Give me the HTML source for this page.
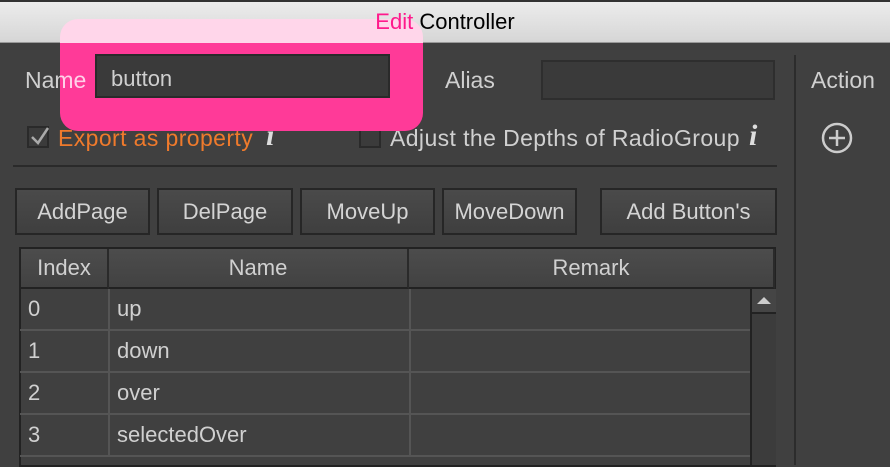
<!DOCTYPE html>
<html><head><style>
*{box-sizing:border-box;margin:0;padding:0}
body{width:890px;height:465px;overflow:hidden;background:#404040;font-family:"Liberation Sans",sans-serif;color:#d0d0d0;font-size:23px;position:relative}
.a{position:absolute}
.title{left:0;top:0;width:890px;height:43px;background:linear-gradient(#ececec,#d6d6d6);border-top:2px solid #333;border-bottom:1px solid #999;text-align:center;line-height:40px;color:#000;font-size:22px}
.inp{background:#3a3a3a;border:2px solid #2e2e2e}
.btn{top:188px;height:47px;background:linear-gradient(#4a4a4a,#3f3f3f);border:2px solid #262626;text-align:center;line-height:43px;font-size:22px;color:#d4d4d4}
.hd{top:249px;height:40px;background:linear-gradient(#4c4c4c,#424242);border-right:2px solid #2a2a2a;border-bottom:2px solid #222;text-align:center;line-height:38px;font-size:22px}
.row{left:20px;width:730px;height:42px;border-bottom:2px solid #555}
.cell{position:absolute;top:0;line-height:40px;font-size:22px}
.info{font-family:"Liberation Serif",serif;font-style:italic;font-weight:bold;color:#ddd;font-size:30px}
.cb{width:22px;height:22px;border:2px solid #2a2a2a;background:#3b3b3b}
.sp{letter-spacing:0.4px}
</style></head><body>
<div class="a title"></div>
<div class="a" style="left:60px;top:19px;width:363px;height:24px;border-radius:18px 18px 0 0;background:#ffd6ea"></div>
<div class="a" style="left:0;top:2px;width:890px;text-align:center;line-height:40px;font-size:22px;color:#000"><span style="color:#ff1a8c">Edit</span> Controller</div>
<div class="a" style="left:25px;top:67px">Name</div>
<div class="a" style="left:445px;top:67px">Alias</div>
<div class="a inp" style="left:541px;top:60px;width:234px;height:40px"></div>
<div class="a" style="left:811px;top:67px">Action</div>
<div class="a" style="left:794px;top:55px;width:2px;height:410px;background:#2c2c2c"></div>
<svg class="a" style="left:820px;top:121px" width="34" height="34"><circle cx="17" cy="17" r="14" fill="none" stroke="#ccc" stroke-width="2.5"/><path d="M17 9V25M9 17H25" stroke="#ccc" stroke-width="2.5"/></svg>
<div class="a cb" style="left:27px;top:126px"></div>
<svg class="a" style="left:29px;top:126px" width="22" height="22"><path d="M3 11L9 17L19 2" fill="none" stroke="#aaa" stroke-width="2.5"/></svg>
<div class="a sp" style="left:58px;top:125px;color:#ef7a2c">Export as property</div>
<div class="a info" style="left:266px;top:119px">i</div>
<div class="a cb" style="left:359px;top:126px"></div>
<div class="a sp" style="left:390px;top:125px">Adjust the Depths of RadioGroup</div>
<div class="a info" style="left:749px;top:119px">i</div>
<div class="a" style="left:13px;top:165px;width:764px;height:2px;background:#2a2a2a"></div>
<div class="a btn" style="left:15px;width:135px">AddPage</div>
<div class="a btn" style="left:157px;width:136px">DelPage</div>
<div class="a btn" style="left:300px;width:135px">MoveUp</div>
<div class="a btn" style="left:442px;width:135px">MoveDown</div>
<div class="a btn" style="left:600px;width:177px">Add Button's</div>
<div class="a" style="left:19px;top:247px;width:757px;height:220px;border:2px solid #222;background:#404040"></div>
<div class="a hd" style="left:21px;width:88px">Index</div>
<div class="a hd" style="left:109px;width:300px">Name</div>
<div class="a hd" style="left:409px;width:366px">Remark</div>
<div class="a row" style="top:289px"><div class="cell" style="left:8px">0</div><div class="cell" style="left:97px">up</div></div>
<div class="a row" style="top:331px"><div class="cell" style="left:8px">1</div><div class="cell" style="left:97px">down</div></div>
<div class="a row" style="top:373px"><div class="cell" style="left:8px">2</div><div class="cell" style="left:97px">over</div></div>
<div class="a row" style="top:415px"><div class="cell" style="left:8px">3</div><div class="cell" style="left:97px">selectedOver</div></div>
<div class="a" style="left:108px;top:289px;width:2px;height:166px;background:#555"></div>
<div class="a" style="left:409px;top:289px;width:2px;height:166px;background:#555"></div>
<div class="a" style="left:750px;top:289px;width:26px;height:176px;background:#3c3c3c;border-left:2px solid #222"></div>
<div class="a" style="left:752px;top:289px;width:24px;height:25px;background:#454545;border-bottom:2px solid #222"></div>
<svg class="a" style="left:755px;top:293px" width="18" height="14"><path d="M2 11L9 4L16 11Z" fill="#ccc"/></svg>
<div class="a" style="left:60px;top:43px;width:363px;height:88px;border-radius:0 0 18px 18px;background:#ff3a98"></div>
<div class="a" style="left:95px;top:54px;width:295px;height:44px;background:#3a3a3a;border:2px solid #2a2a2a"></div>
<div class="a" style="left:111px;top:66px;color:#cfcfcf;font-size:22px">button</div>
<div class="a" style="left:25px;top:67px;color:#ffd0e8;clip-path:inset(0 0 0 35px)">Name</div>
</body></html>
